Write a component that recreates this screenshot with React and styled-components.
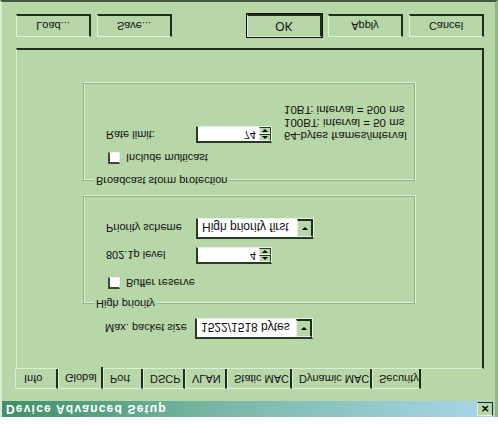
import React from "react";
import styled, { createGlobalStyle } from "styled-components";

const GlobalStyle = createGlobalStyle`
  html, body {
    margin: 0;
    padding: 0;
    background: #ffffff;
    overflow: hidden;
  }
  * {
    box-sizing: border-box;
  }
`;

const tabs = [
  { label: "Info", width: 43, pad: 8 },
  { label: "Global", width: 45, active: true },
  { label: "Port", width: 40 },
  { label: "DSCP", width: 42 },
  { label: "VLAN", width: 42 },
  { label: "Static MAC", width: 65 },
  { label: "Dynamic MAC", width: 80 },
  { label: "Security", width: 49 },
];

const Spin = ({ value }) => (
  <SpinBox>
    <SpinValue>{value}</SpinValue>
    <SpinButtons>
      <SpinHalf>
        <Arrow $up />
      </SpinHalf>
      <SpinHalf>
        <Arrow />
      </SpinHalf>
    </SpinButtons>
  </SpinBox>
);

const Select = ({ value }) => (
  <SelectBox>
    <SelectValue>{value}</SelectValue>
    <SelectButton>
      <Arrow />
    </SelectButton>
  </SelectBox>
);

const Check = ({ label }) => (
  <CheckRow>
    <CheckSquare />
    <CheckLabel>{label}</CheckLabel>
  </CheckRow>
);

const App = () => {
  return (
    <>
      <GlobalStyle />
      <Screen>
        <Strip />
        <Window>
          <TitleBar>
            <Title>Device Advanced Setup</Title>
            <CloseButton>✕</CloseButton>
          </TitleBar>
          <Body>
            <TabStrip>
              {tabs.map((t) => (
                <Tab
                  key={t.label}
                  $width={t.width}
                  $active={t.active}
                  $pad={t.pad || 6}
                >
                  {t.label}
                </Tab>
              ))}
            </TabStrip>
            <Panel>
              <FieldRow>
                <FieldLabel>Max. packet size</FieldLabel>
                <Select value="1522/1518 bytes" />
              </FieldRow>

              <Group $height={108} $gap={14}>
                <Legend>High priority</Legend>
                <GroupBody $top={13}>
                  <Check label="Buffer reserve" />
                  <InnerRow $mt={12}>
                    <FieldLabel>802.1p level</FieldLabel>
                    <Spin value="4" />
                  </InnerRow>
                  <InnerRow $mt={8}>
                    <FieldLabel>Priority scheme</FieldLabel>
                    <Select value="High priority first" />
                  </InnerRow>
                </GroupBody>
              </Group>

              <Group $height={98} $gap={15}>
                <Legend>Broadcast storm protection</Legend>
                <GroupBody $top={15}>
                  <Check label="Include multicast" />
                  <InnerRow $mt={8} $align="flex-start">
                    <FieldLabel $pt={2}>Rate limit:</FieldLabel>
                    <Spin value="74" />
                    <Note>
                      <div>64-bytes frames/interval</div>
                      <div>100BT: interval = 50 ms</div>
                      <div>10BT: interval = 500 ms</div>
                    </Note>
                  </InnerRow>
                </GroupBody>
              </Group>
            </Panel>
            <ButtonBar>
              <ButtonGroup>
                <Button>Load...</Button>
                <Button>Save...</Button>
              </ButtonGroup>
              <ButtonGroup>
                <Button $default>OK</Button>
                <Button>Apply</Button>
                <Button>Cancel</Button>
              </ButtonGroup>
            </ButtonBar>
          </Body>
        </Window>
      </Screen>
    </>
  );
};

export default App;

const Screen = styled.div`
  width: 498px;
  height: 425px;
  display: flex;
  flex-direction: column;
  transform: scaleY(-1);
  font-family: "Liberation Sans", Arial, sans-serif;
  font-size: 11px;
  color: #111;
`;

const Strip = styled.div`
  height: 8px;
  background: #ffffff;
`;

const Window = styled.div`
  flex: 1;
  display: flex;
  flex-direction: column;
  background: #b7d7a9;
  border-left: 2px solid #d9ecd0;
  border-right: 3px solid #8fb983;
  border-bottom: 2px solid #3f5a3a;
`;

const TitleBar = styled.div`
  height: 16px;
  margin-right: 1px;
  display: flex;
  align-items: center;
  justify-content: space-between;
  background: linear-gradient(90deg, #3f8f68 0%, #79b8a6 45%, #a9d6ea 100%);
  padding: 0 1px 0 4px;
`;

const Title = styled.div`
  color: #ffffff;
  font-weight: bold;
  font-size: 12px;
  letter-spacing: 1.2px;
`;

const CloseButton = styled.div`
  width: 16px;
  height: 14px;
  display: flex;
  align-items: center;
  justify-content: center;
  background: #b7d7a9;
  border-top: 1px solid #e4f2dc;
  border-left: 1px solid #e4f2dc;
  border-right: 1px solid #1c2a1a;
  border-bottom: 1px solid #1c2a1a;
  font-size: 10px;
  font-weight: bold;
  color: #000;
`;

const Body = styled.div`
  display: flex;
  flex-direction: column;
  padding: 12px 0 0 14px;
`;

const TabStrip = styled.div`
  display: flex;
  height: 20px;
  align-items: flex-end;
  margin-left: -1px;
`;

const Tab = styled.div`
  width: ${(p) => p.$width}px;
  height: ${(p) => (p.$active ? 22 : 20)}px;
  margin-bottom: ${(p) => (p.$active ? -2 : 0)}px;
  padding: ${(p) => (p.$active ? 4 : 3)}px 0 0 ${(p) => p.$pad}px;
  background: #b7d7a9;
  border-top: 1px solid #dcefd3;
  border-left: 1px solid #dcefd3;
  border-right: 2px solid #1f2e1c;
  position: relative;
  z-index: ${(p) => (p.$active ? 2 : 1)};
  white-space: nowrap;
`;

const Panel = styled.div`
  width: 468px;
  height: 321px;
  display: flex;
  flex-direction: column;
  padding: 29px 0 0 66px;
  border-top: 1px solid #dcefd3;
  border-left: 1px solid #dcefd3;
  border-right: 2px solid #1f2e1c;
  border-bottom: 2px solid #1f2e1c;
`;

const FieldRow = styled.div`
  display: flex;
  align-items: center;
  height: 21px;
  padding-left: 22px;
`;

const FieldLabel = styled.div`
  width: 90px;
  padding-top: ${(p) => p.$pt || 0}px;
`;

const Group = styled.div`
  position: relative;
  width: 332px;
  height: ${(p) => p.$height}px;
  margin-top: ${(p) => p.$gap}px;
  border: 1px solid #8fb284;
  box-shadow: inset 1px 1px 0 #def0d6, 1px 1px 0 #def0d6;
`;

const Legend = styled.div`
  position: absolute;
  top: -7px;
  left: 10px;
  padding: 0 2px;
  background: #b7d7a9;
  line-height: 13px;
`;

const GroupBody = styled.div`
  display: flex;
  flex-direction: column;
  padding: ${(p) => p.$top}px 0 0 22px;
`;

const InnerRow = styled.div`
  display: flex;
  align-items: ${(p) => p.$align || "center"};
  margin-top: ${(p) => p.$mt}px;
`;

const CheckRow = styled.div`
  display: flex;
  align-items: center;
  height: 14px;
  padding-left: 2px;
`;

const CheckSquare = styled.div`
  width: 12px;
  height: 12px;
  background: #ffffff;
  border-top: 2px solid #3a4a36;
  border-left: 2px solid #3a4a36;
  border-right: 1px solid #e8f4e2;
  border-bottom: 1px solid #e8f4e2;
`;

const CheckLabel = styled.div`
  margin-left: 6px;
`;

const SpinBox = styled.div`
  width: 76px;
  height: 17px;
  display: flex;
  background: #ffffff;
  border-top: 2px solid #2b3a28;
  border-left: 2px solid #2b3a28;
  border-right: 1px solid #e6f3e0;
  border-bottom: 1px solid #e6f3e0;
`;

const SpinValue = styled.div`
  flex: 1;
  text-align: right;
  padding-right: 3px;
  line-height: 13px;
`;

const SpinButtons = styled.div`
  width: 12px;
  display: flex;
  flex-direction: column;
  background: #b7d7a9;
`;

const SpinHalf = styled.div`
  flex: 1;
  display: flex;
  align-items: center;
  justify-content: center;
  border-right: 1px solid #2b3a28;
  border-bottom: 1px solid #2b3a28;
  border-top: 1px solid #e6f3e0;
  border-left: 1px solid #e6f3e0;
`;

const Arrow = styled.div`
  width: 0;
  height: 0;
  border-left: 3px solid transparent;
  border-right: 3px solid transparent;
  ${(p) =>
    p.$up
      ? "border-bottom: 3px solid #000;"
      : "border-top: 3px solid #000;"}
`;

const SelectBox = styled.div`
  width: 118px;
  height: 21px;
  display: flex;
  background: #ffffff;
  border-top: 2px solid #2b3a28;
  border-left: 2px solid #2b3a28;
  border-right: 1px solid #e6f3e0;
  border-bottom: 1px solid #e6f3e0;
`;

const SelectValue = styled.div`
  flex: 1;
  padding: 3px 0 0 4px;
  font-size: 12px;
  white-space: nowrap;
  overflow: hidden;
`;

const SelectButton = styled.div`
  width: 16px;
  display: flex;
  align-items: center;
  justify-content: center;
  background: #b7d7a9;
  border-top: 1px solid #e6f3e0;
  border-left: 1px solid #e6f3e0;
  border-right: 2px solid #1f2e1c;
  border-bottom: 2px solid #1f2e1c;
`;

const Note = styled.div`
  margin-left: 12px;
  margin-top: 1px;
  line-height: 13px;
  font-size: 11.5px;
`;

const ButtonBar = styled.div`
  width: 468px;
  display: flex;
  justify-content: space-between;
  margin-top: 11px;
`;

const ButtonGroup = styled.div`
  display: flex;
  gap: 6px;
`;

const Button = styled.div`
  width: 75px;
  height: 23px;
  display: flex;
  align-items: center;
  justify-content: center;
  background: #b7d7a9;
  border-top: 1px solid #e2f1da;
  border-left: 1px solid #e2f1da;
  border-right: 2px solid #1f2e1c;
  border-bottom: 2px solid #1f2e1c;
  outline: ${(p) => (p.$default ? "1px solid #111" : "none")};
  font-size: ${(p) => (p.$default ? 12 : 11)}px;
`;
